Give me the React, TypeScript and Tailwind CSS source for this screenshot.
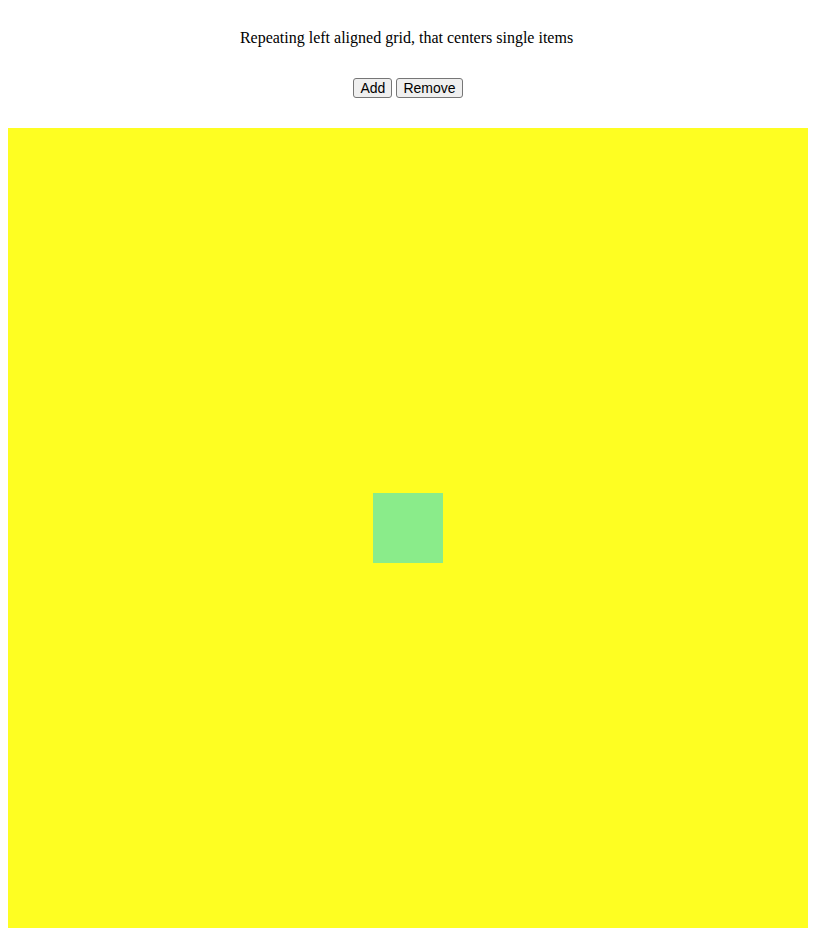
import { FC, useState } from "react";

const App: FC = () => {
  const [count, setCount] = useState<number>(1);

  const btn =
    "bg-[#efefef] border border-[#767676] rounded-[3px] px-[6px] py-[1px] text-[14px] leading-[16px] text-black font-['Liberation_Sans',Arial,sans-serif] hover:bg-[#e5e5e5]";

  return (
    <div className="min-h-screen bg-white p-2 font-['Liberation_Serif','Times_New_Roman',serif] text-black">
      <p className="mt-[21px] text-center text-base leading-[18px]">
        Repeating left aligned grid, that centers single items
      </p>
      <div className="mt-[31px] ml-[3px] flex justify-center gap-1">
        <button className={btn} onClick={() => setCount(count + 1)}>
          Add
        </button>
        <button className={btn} onClick={() => setCount(Math.max(0, count - 1))}>
          Remove
        </button>
      </div>
      <div className="mt-[30px] w-[800px] h-[800px] bg-[#fefe22] flex flex-wrap items-center justify-center content-center">
        {Array.from({ length: count }).map((_, i) => (
          <div key={i} className="w-[70px] h-[70px] bg-[#8aec8a]" />
        ))}
      </div>
    </div>
  );
};

export default App;
